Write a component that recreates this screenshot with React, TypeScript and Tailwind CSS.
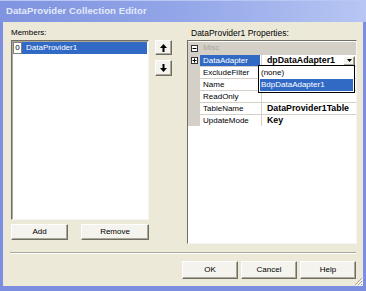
import React from "react";

type Prop = {
  name: string;
  value?: string;
  expand?: boolean;
  selected?: boolean;
  dropdown?: boolean;
};

const props: Prop[] = [
  { name: "DataAdapter", value: "dpDataAdapter1", expand: true, selected: true, dropdown: true },
  { name: "ExcludeFilter" },
  { name: "Name" },
  { name: "ReadOnly" },
  { name: "TableName", value: "DataProvider1Table" },
  { name: "UpdateMode", value: "Key" },
];

// botão estilo clássico do Windows
const btn =
  "flex items-center justify-center bg-[#f4f3ee] border border-t-white border-l-white border-r-[#716f64] border-b-[#716f64] shadow-[inset_-1px_-1px_0_#aca899] text-[8px] leading-none text-black";

function PlusMinus({ minus }: { minus?: boolean }) {
  return (
    <svg width="7" height="7" viewBox="0 0 7 7" className="block">
      <rect x="0.5" y="0.5" width="6" height="6" fill="white" stroke="#333" />
      <line x1="1.5" y1="3.5" x2="5.5" y2="3.5" stroke="#000" />
      {!minus && <line x1="3.5" y1="1.5" x2="3.5" y2="5.5" stroke="#000" />}
    </svg>
  );
}

function Arrow({ down }: { down?: boolean }) {
  return (
    <svg width="7" height="8" viewBox="0 0 7 8" className="block">
      {down ? (
        <path d="M2.5 0h2v4h2.5L3.5 8 0 4h2.5z" fill="#000" />
      ) : (
        <path d="M3.5 0L7 4H4.5v4h-2V4H0z" fill="#000" />
      )}
    </svg>
  );
}

export default function App() {
  return (
    <div className="w-[366px] h-[291px] flex flex-col overflow-hidden font-['Liberation_Sans',Arial,sans-serif] text-black">
      {/* Barra de título */}
      <div className="h-[22px] shrink-0 flex items-center pl-[6px] bg-gradient-to-r from-[#7f93e0] via-[#93a6e8] to-[#b7c6f3] shadow-[inset_0_1px_0_#b9c7f4]">
        <span className="text-[9.5px] font-bold text-[#e4eafb] tracking-[0.1px]">
          DataProvider Collection Editor
        </span>
      </div>

      {/* Corpo da janela */}
      <div className="relative flex-1 flex flex-col bg-[#ece9d8] border-l-[3px] border-r-[3px] border-b-[5px] border-[#7b8ee0]">
        <div className="flex pl-[8px] pt-[6px]">
          {/* Membros */}
          <div className="w-[138px] flex flex-col">
            <div className="text-[8px] leading-[10px] h-[10px]">Members:</div>
            <div className="mt-[2px] h-[180px] bg-white border border-t-[#716f64] border-l-[#716f64] border-r-[#f5f4ee] border-b-[#f5f4ee] shadow-[inset_1px_1px_0_#aca899]">
              <div className="mt-[1px] ml-[1px] mr-[1px] h-[12px] flex items-center bg-[#316ac5]">
                <div className="w-[9px] h-[12px] flex items-center justify-center bg-white border border-[#808080] text-[8px] leading-none">
                  0
                </div>
                <span className="ml-[4px] text-[8px] leading-none text-white">DataProvider1</span>
              </div>
            </div>
            <div className="flex mt-[4px]">
              <div className={`${btn} w-[58px] h-[16px]`}>Add</div>
              <div className={`${btn} w-[69px] h-[16px] ml-[13px]`}>Remove</div>
            </div>
          </div>

          {/* Setas */}
          <div className="ml-[6px] pt-[12px] flex flex-col gap-[5px]">
            <div className={`${btn} w-[17px] h-[15px]`}>
              <Arrow />
            </div>
            <div className={`${btn} w-[17px] h-[16px]`}>
              <Arrow down />
            </div>
          </div>

          {/* Propriedades */}
          <div className="ml-[15px] w-[170px] flex flex-col">
            <div className="text-[8.5px] leading-[10px] h-[10px] pl-[4px]">DataProvider1 Properties:</div>
            <div className="relative mt-[2px] h-[204px] bg-white border border-t-[#716f64] border-l-[#716f64] border-r-[#f5f4ee] border-b-[#f5f4ee] pt-[1px]">
              <div className="h-[12px] flex items-center bg-[#d4d0c8]">
                <div className="w-[12px] flex justify-center">
                  <PlusMinus minus />
                </div>
                <span className="ml-[3px] text-[8px] leading-none text-[#a7a59b]">Misc</span>
              </div>
              {props.map((p) => (
                <div key={p.name} className="h-[12px] flex border-t border-[#d4d0c8]">
                  <div className="w-[12px] flex items-center justify-center bg-[#d4d0c8]">
                    {p.expand && <PlusMinus />}
                  </div>
                  <div className="w-[62px] flex border-r border-[#d4d0c8]">
                    <div
                      className={`flex-1 flex items-center pl-[3px] text-[8px] leading-none ${
                        p.selected ? "bg-[#316ac5] text-white mr-[1px]" : "text-black"
                      }`}
                    >
                      {p.name}
                    </div>
                  </div>
                  <div className="flex-1 flex items-center pl-[5px]">
                    <span className="flex-1 text-[8.8px] font-bold leading-none">{p.value}</span>
                    {p.dropdown && (
                      <div className={`${btn} w-[12px] h-[10px] mr-[1px]`}>
                        <svg width="5" height="3" viewBox="0 0 5 3">
                          <path d="M0 0h5L2.5 3z" fill="#000" />
                        </svg>
                      </div>
                    )}
                  </div>
                </div>
              ))}

              {/* Lista suspensa aberta */}
              <div className="absolute left-[70px] top-[24px] w-[97px] h-[28px] bg-white border border-black p-[1px]">
                <div className="h-[12px] flex items-center pl-[1px] text-[8px] leading-none">(none)</div>
                <div className="h-[12px] flex items-center pl-[1px] bg-[#316ac5] text-white text-[8px] leading-none">
                  BdpDataAdapter1
                </div>
              </div>
            </div>
          </div>
        </div>

        {/* Separador */}
        <div className="mt-[8px] ml-[7px] mr-[7px] h-[2px] border-t border-[#aca899] border-b border-b-white" />

        {/* Botões inferiores */}
        <div className="flex justify-end gap-[3px] pr-[7px] mt-[7px]">
          <div className={`${btn} w-[56px] h-[18px]`}>OK</div>
          <div className={`${btn} w-[56px] h-[18px]`}>Cancel</div>
          <div className={`${btn} w-[56px] h-[18px]`}>Help</div>
        </div>

        {/* Alça de redimensionamento */}
        <svg width="9" height="9" viewBox="0 0 9 9" className="absolute right-0 bottom-0">
          <path d="M8 1L1 8M8 4L4 8M8 7L7 8" stroke="#aca899" strokeWidth="1" />
          <path d="M9 2L2 9M9 5L5 9" stroke="#fff" strokeWidth="1" />
        </svg>
      </div>
    </div>
  );
}
